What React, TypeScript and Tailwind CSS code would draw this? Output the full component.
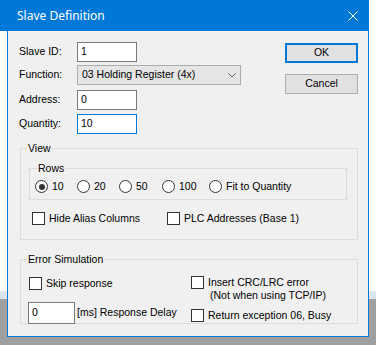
import { useState } from "react";

const ROWS = [
  { value: "10", width: "w-[42px]" },
  { value: "20", width: "w-[42px]" },
  { value: "50", width: "w-[43px]" },
  { value: "100", width: "w-[47px]" },
  { value: "Fit to Quantity", width: "" },
];

function Radio({ label, checked, onClick, className }: { label: string; checked: boolean; onClick: () => void; className?: string }) {
  return (
    <div className={`flex items-center ${className ?? ""}`} onClick={onClick}>
      <span className="w-[13px] h-[13px] rounded-full border border-[#333333] bg-white flex items-center justify-center flex-shrink-0">
        {checked && <span className="w-[6px] h-[6px] rounded-full bg-[#333333]" />}
      </span>
      <span className="ml-[4px]">{label}</span>
    </div>
  );
}

function Check({ label, className }: { label?: string; className?: string }) {
  return (
    <div className={`flex items-center ${className ?? ""}`}>
      <span className="w-[13px] h-[13px] border border-[#333333] bg-white flex-shrink-0" />
      {label && <span className="ml-[4px]">{label}</span>}
    </div>
  );
}

function Field({ value, focused }: { value: string; focused?: boolean }) {
  return (
    <div className={`w-[60px] h-[20px] bg-white border flex items-center pl-[3px] ${focused ? "border-[#0078d7]" : "border-[#7a7a7a]"}`}>
      {value}
    </div>
  );
}

export default function App() {
  const [rows, setRows] = useState("10");

  return (
    <div className="w-[376px] h-[345px] overflow-hidden bg-[linear-gradient(to_bottom,#ffffff_0px,#ffffff_291px,#dfe8f2_291px,#d4e2f0_299px,#a0a0a0_299px,#a0a0a0_100%)] font-['Liberation_Sans',Arial,sans-serif] text-[10.5px] text-black">
      {/* Title bar */}
      <div className="w-[369px] h-[31px] bg-[#0078d7] flex items-center pl-[17px] text-white">
        <span className="font-['Noto_Sans',sans-serif] text-[12px]">Slave Definition</span>
        <svg className="ml-auto mr-[11px]" width="10" height="10" viewBox="0 0 10 10">
          <path d="M0.5 0.5 L9.5 9.5 M9.5 0.5 L0.5 9.5" stroke="#ffffff" strokeWidth="1" fill="none" />
        </svg>
      </div>

      {/* Body */}
      <div className="ml-[7px] w-[362px] h-[306px] bg-[#f0f0f0] border-x border-b border-[#0078d7]">
        <div className="flex pt-[11px]">
          <div className="pl-[11px]">
            <div className="flex items-center h-[20px]">
              <span className="w-[58px]">Slave ID:</span>
              <Field value="1" />
            </div>
            <div className="flex items-center h-[20px] mt-[3px]">
              <span className="w-[58px]">Function:</span>
              <div className="w-[164px] h-[20px] bg-[#e5e5e5] border border-[#acacac] flex items-center pl-[4px] pr-[4px]">
                <span>03 Holding Register (4x)</span>
                <svg className="ml-auto" width="8" height="5" viewBox="0 0 8 5">
                  <path d="M0.5 0.5 L4 4 L7.5 0.5" stroke="#606060" strokeWidth="1" fill="none" />
                </svg>
              </div>
            </div>
            <div className="flex items-center h-[20px] mt-[5px]">
              <span className="w-[58px]">Address:</span>
              <Field value="0" />
            </div>
            <div className="flex items-center h-[20px] mt-[4px]">
              <span className="w-[58px]">Quantity:</span>
              <Field value="10" focused />
            </div>
          </div>
          <div className="ml-auto pr-[10px] pt-[1px] flex flex-col gap-[11px]">
            <button className="w-[73px] h-[20px] bg-[#e1e1e1] border-2 border-[#0078d7] flex items-center justify-center">OK</button>
            <button className="w-[73px] h-[20px] bg-[#e1e1e1] border border-[#adadad] flex items-center justify-center">Cancel</button>
          </div>
        </div>

        {/* View */}
        <div className="relative mt-[14px] ml-[12px] w-[338px] h-[92px] border border-[#dcdcdc] pl-[8px] pt-[19px]">
          <span className="absolute -top-[7px] left-[6px] px-[1px] bg-[#f0f0f0] leading-[12px]">View</span>
          <div className="relative w-[318px] h-[32px] border border-[#dcdcdc] pl-[5px] pt-[10px]">
            <span className="absolute -top-[7px] left-[7px] px-[1px] bg-[#f0f0f0] leading-[12px]">Rows</span>
            <div className="flex">
              {ROWS.map((r) => (
                <Radio key={r.value} label={r.value} checked={rows === r.value} onClick={() => setRows(r.value)} className={r.width} />
              ))}
            </div>
          </div>
          <div className="flex mt-[11px] ml-[3px]">
            <Check label="Hide Alias Columns" className="w-[135px]" />
            <Check label="PLC Addresses (Base 1)" />
          </div>
        </div>

        {/* Error Simulation */}
        <div className="relative mt-[19px] ml-[12px] w-[338px] h-[65px] border border-[#dcdcdc] pl-[8px] pt-[16px] flex">
          <span className="absolute -top-[7px] left-[6px] px-[1px] bg-[#f0f0f0] leading-[12px]">Error Simulation</span>
          <div className="w-[162px]">
            <Check label="Skip response" />
            <div className="flex items-center mt-[10px] -ml-[1px]">
              <div className="w-[47px] h-[22px] bg-white border border-[#7a7a7a] flex items-center pl-[3px]">0</div>
              <span className="ml-[2px]">[ms] Response Delay</span>
            </div>
          </div>
          <div>
            <div className="flex items-start">
              <Check />
              <div className="ml-[4px] leading-[13px]">
                <div>Insert CRC/LRC error</div>
                <div className="pl-[2px]">(Not when using TCP/IP)</div>
              </div>
            </div>
            <Check label="Return exception 06, Busy" className="mt-[6px]" />
          </div>
        </div>
      </div>
    </div>
  );
}
